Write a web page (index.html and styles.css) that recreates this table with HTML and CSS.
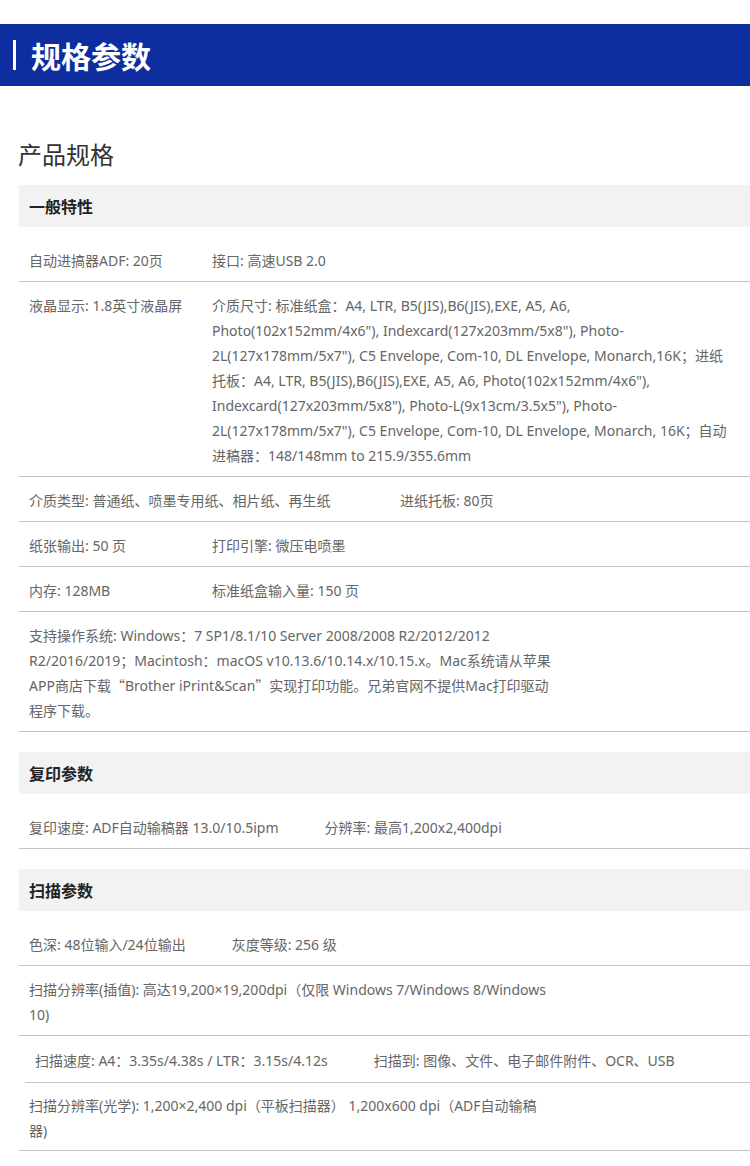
FILE: index.html
```html
<!DOCTYPE html>
<html lang="zh-CN">
<head>
<meta charset="utf-8">
<title>规格参数</title>
<link rel="stylesheet" href="styles.css">
</head>
<body>
<header class="banner">
  <span class="banner-bar"></span>
  <h1 class="banner-title">规格参数</h1>
</header>

<main class="main">
  <h2 class="page-title">产品规格</h2>

  <section class="spec-section">
    <h3 class="spec-head">一般特性</h3>
    <div class="spec-list">
      <div class="spec-row">
        <div class="cell cell--key">自动进搞器ADF: 20页</div>
        <div class="cell">接口: 高速USB 2.0</div>
      </div>
      <div class="spec-row">
        <div class="cell cell--key cell--snug">液晶显示: 1.8英寸液晶屏</div>
        <div class="cell">介质尺寸: 标准纸盒：A4, LTR, B5(JIS),B6(JIS),EXE, A5, A6, Photo(102x152mm/4x6"), Indexcard(127x203mm/5x8"), Photo-2L(127x178mm/5x7"), C5 Envelope, Com-10, DL Envelope, Monarch,16K；进纸托板：A4, LTR, B5(JIS),B6(JIS),EXE, A5, A6, Photo(102x152mm/4x6"), Indexcard(127x203mm/5x8"), Photo-L(9x13cm/3.5x5"), Photo-2L(127x178mm/5x7"), C5 Envelope, Com-10, DL Envelope, Monarch, 16K；自动进稿器：148/148mm to 215.9/355.6mm</div>
      </div>
      <div class="spec-row">
        <div class="cell cell--key cell--wide">介质类型: 普通纸、喷墨专用纸、相片纸、再生纸</div>
        <div class="cell">进纸托板: 80页</div>
      </div>
      <div class="spec-row">
        <div class="cell cell--key">纸张输出: 50 页</div>
        <div class="cell">打印引擎: 微压电喷墨</div>
      </div>
      <div class="spec-row">
        <div class="cell cell--key">内存: 128MB</div>
        <div class="cell">标准纸盒输入量: 150 页</div>
      </div>
      <div class="spec-row">
        <div class="cell">支持操作系统: Windows：7 SP1/8.1/10 Server 2008/2008 R2/2012/2012 R2/2016/2019；Macintosh：macOS v10.13.6/10.14.x/10.15.x。Mac系统请从苹果APP商店下载<span class="cjk">“</span>Brother iPrint&amp;Scan<span class="cjk">”</span>实现打印功能。兄弟官网不提供Mac打印驱动程序下载。</div>
      </div>
    </div>
  </section>

  <section class="spec-section">
    <h3 class="spec-head">复印参数</h3>
    <div class="spec-list">
      <div class="spec-row">
        <div class="cell cell--key">复印速度: ADF自动输稿器 13.0/10.5ipm</div>
        <div class="cell">分辨率: 最高1,200x2,400dpi</div>
      </div>
    </div>
  </section>

  <section class="spec-section">
    <h3 class="spec-head">扫描参数</h3>
    <div class="spec-list">
      <div class="spec-row">
        <div class="cell cell--key">色深: 48位输入/24位输出</div>
        <div class="cell">灰度等级: 256 级</div>
      </div>
      <div class="spec-row">
        <div class="cell">扫描分辨率(插值): 高达19,200×19,200dpi（仅限 Windows 7/Windows 8/Windows 10)</div>
      </div>
      <div class="spec-row spec-row--inset">
        <div class="cell cell--key">扫描速度: A4：3.35s/4.38s / LTR：3.15s/4.12s</div>
        <div class="cell">扫描到: 图像、文件、电子邮件附件、OCR、USB</div>
      </div>
      <div class="spec-row spec-row--tight">
        <div class="cell">扫描分辨率(光学): 1,200×2,400 dpi（平板扫描器） 1,200x600 dpi（ADF自动输稿器)</div>
      </div>
    </div>
  </section>
</main>
</body>
</html>
```

FILE: styles.css
```css
* {
  box-sizing: border-box;
}

body {
  margin: 0;
  background: #ffffff;
  font-family: "Noto Sans", "Noto Sans CJK SC", sans-serif;
  color: #666666;
}

.banner {
  margin-top: 24px;
  height: 62px;
  background: #0e2ea0;
  display: flex;
  align-items: center;
  padding-left: 13px;
}

.banner-bar {
  width: 3px;
  height: 30px;
  background: #ffffff;
  margin-right: 15px;
}

.banner-title {
  margin: 0;
  color: #ffffff;
  font-size: 30px;
  font-weight: 700;
  line-height: 40px;
  font-family: "Noto Sans CJK SC", sans-serif;
}

.main {
  padding-left: 18px;
}

.page-title {
  margin: 50px 0 13px;
  font-size: 24px;
  line-height: 36px;
  font-weight: 400;
  color: #333333;
  font-family: "Noto Sans CJK SC", sans-serif;
}

.spec-section {
  margin-left: 1px;
  margin-bottom: 20px;
}

.spec-head {
  margin: 0;
  height: 42px;
  background: #f2f2f2;
  padding-left: 10px;
  display: flex;
  align-items: center;
  font-size: 16px;
  font-weight: 700;
  color: #222222;
  font-family: "Noto Sans CJK SC", sans-serif;
}

.spec-list {
  padding-top: 10px;
}

.spec-row {
  display: flex;
  flex-wrap: wrap;
  padding: 11px 0 8px 10px;
  border-bottom: 1px solid #c4c4c4;
  font-size: 14px;
  line-height: 25px;
}

.spec-row--inset {
  margin-left: 6px;
  padding-top: 12px;
  padding-bottom: 9px;
}

.spec-row--tight {
  padding-top: 10px;
  padding-bottom: 7px;
}

.cell {
  max-width: 523px;
  min-width: 0;
}

.cell--key {
  min-width: 183px;
  padding-right: 46px;
  flex-shrink: 0;
}

.cell--snug {
  padding-right: 0;
}

.cell--wide {
  min-width: 371px;
}

.cjk {
  font-family: "Noto Sans CJK SC", sans-serif;
}
```
